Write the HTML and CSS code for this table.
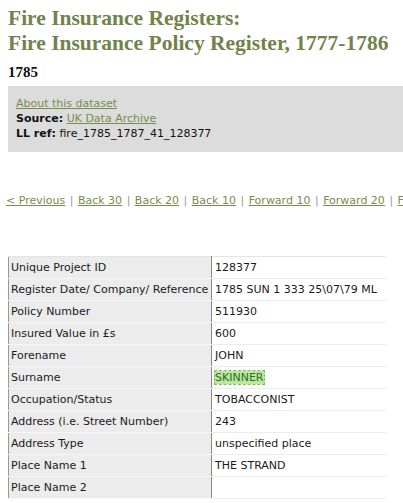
FILE: index.html
```html
<!DOCTYPE html>
<html lang="en">
<head>
  <meta charset="UTF-8" />
  <title>Fire Insurance Policy Register - 1785</title>
  <link rel="stylesheet" href="styles.css">
</head>
<body>
  <div class="page">
    <h1 class="title">Fire Insurance Registers:<br>Fire Insurance Policy Register, 1777-1786</h1>
    <h2 class="year">1785</h2>

    <div class="info-box">
      <a href="#">About this dataset</a><br>
      <strong>Source:</strong> <a href="#">UK Data Archive</a><br>
      <strong>LL ref:</strong> fire_1785_1787_41_128377
    </div>

    <div class="pager">
      <a href="#">&lt; Previous</a> <span class="sep">|</span>
      <a href="#">Back 30</a> <span class="sep">|</span>
      <a href="#">Back 20</a> <span class="sep">|</span>
      <a href="#">Back 10</a> <span class="sep">|</span>
      <a href="#">Forward 10</a> <span class="sep">|</span>
      <a href="#">Forward 20</a> <span class="sep">|</span>
      <a href="#">Forward 30</a> <span class="sep">|</span>
      <a href="#">Next &gt;</a>
    </div>

    <table class="record">
      <tr><td class="label">Unique Project ID</td><td class="value">128377</td></tr>
      <tr><td class="label">Register Date/ Company/ Reference</td><td class="value">1785 SUN 1 333 25\07\79 ML</td></tr>
      <tr><td class="label">Policy Number</td><td class="value">511930</td></tr>
      <tr><td class="label">Insured Value in £s</td><td class="value">600</td></tr>
      <tr><td class="label">Forename</td><td class="value">JOHN</td></tr>
      <tr><td class="label">Surname</td><td class="value"><span class="hit">SKINNER</span></td></tr>
      <tr><td class="label">Occupation/Status</td><td class="value">TOBACCONIST</td></tr>
      <tr><td class="label">Address (i.e. Street Number)</td><td class="value">243</td></tr>
      <tr><td class="label">Address Type</td><td class="value">unspecified place</td></tr>
      <tr><td class="label">Place Name 1</td><td class="value">THE STRAND</td></tr>
      <tr><td class="label">Place Name 2</td><td class="value"></td></tr>
    </table>
  </div>
</body>
</html>
```

FILE: styles.css
```css
body {
  margin: 0;
  padding: 0;
  background: #fff;
  color: #1a1a1a;
  font-family: 'DejaVu Sans', sans-serif;
  font-size: 11px;
  overflow: hidden;
}

.page {
  padding: 6px 0 0 8px;
  width: 560px;
}

.title {
  margin: 0;
  font-family: 'Liberation Serif', serif;
  font-weight: bold;
  font-size: 21.5px;
  line-height: 25px;
  color: #71824a;
  white-space: nowrap;
}

.year {
  margin: 6px 0 0;
  font-family: 'Liberation Serif', serif;
  font-weight: bold;
  font-size: 15px;
  line-height: 20px;
  color: #111;
}

.info-box {
  margin-top: 4px;
  background: #dcdcdc;
  padding: 10px 8px 11px;
  line-height: 15px;
  color: #111;
}

.info-box a,
.pager a {
  color: #7b8b4e;
  text-decoration: underline;
}

.pager {
  margin-top: 41px;
  margin-left: -2px;
  white-space: nowrap;
  line-height: 15px;
}

.pager .sep {
  color: #999;
  padding: 0 1px;
}

.record {
  margin-top: 48px;
  border-collapse: collapse;
  width: 378px;
}

.record td {
  height: 22px;
  padding: 0 0 0 3px;
  vertical-align: middle;
  white-space: nowrap;
  box-sizing: border-box;
}

.record .label {
  width: 203px;
  padding-left: 2px;
  background: #ececec;
  border-left: 1px solid #999;
  border-right: 1px solid #888;
  border-bottom: 1px solid #f6f6f6;
}

.record .value {
  border-bottom: 1px solid #ececec;
}

.record tr:first-child td {
  border-top: 1px solid #e4e4e4;
}

.hit {
  background: #b9e7a0;
  outline: 1px dashed #7cc25a;
  color: #2f6f2a;
}
```
